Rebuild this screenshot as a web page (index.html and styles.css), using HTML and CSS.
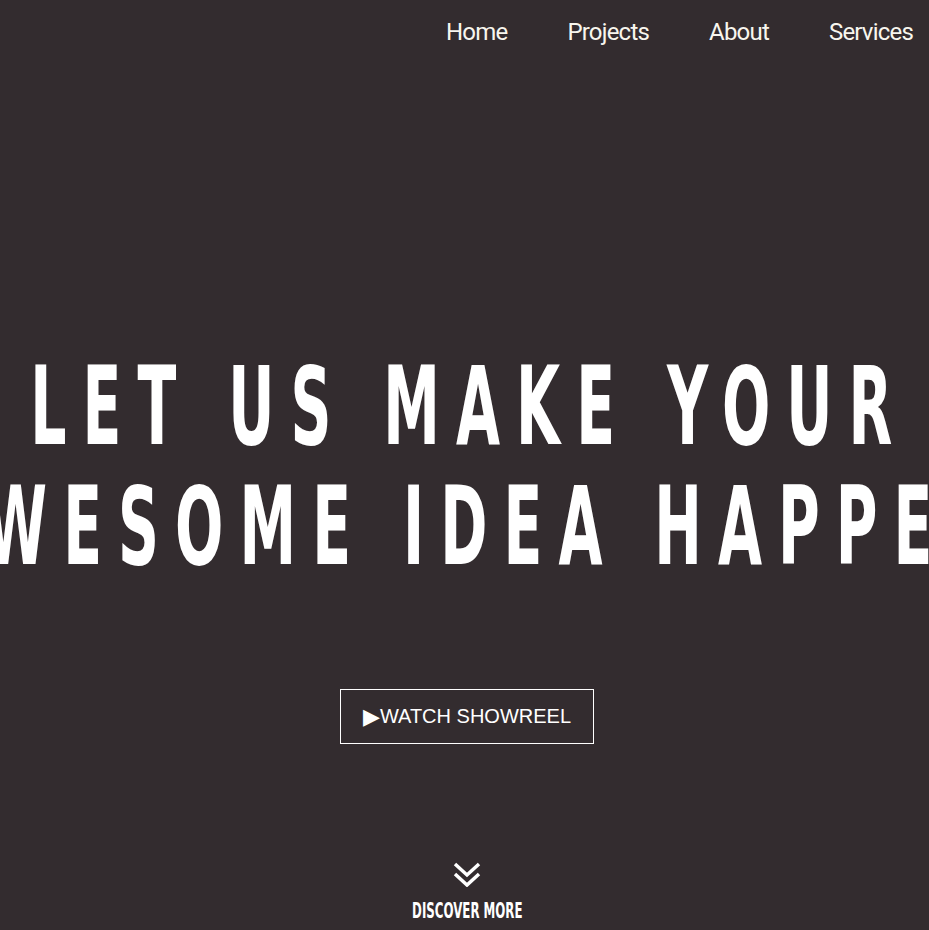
FILE: index.html
```html
<!DOCTYPE html>
<html lang="en">
<head>
<meta charset="utf-8">
<title>Let us make your awesome idea happen</title>
<link rel="stylesheet" href="styles.css">
</head>
<body>
<header class="site-header">
  <nav class="nav">
    <a class="nav-link" href="#">Home</a>
    <a class="nav-link" href="#">Projects</a>
    <a class="nav-link" href="#">About</a>
    <a class="nav-link" href="#">Services</a>
  </nav>
</header>
<main class="hero">
  <h1 class="headline">
    <span class="headline-row"><span class="headline-text">LET US MAKE YOUR</span></span>
    <span class="headline-row"><span class="headline-text">AWESOME IDEA HAPPEN</span></span>
  </h1>
  <a class="showreel" href="#"><span class="play">▶</span>WATCH SHOWREEL</a>
  <a class="discover" href="#">
    <svg class="chevrons" width="28" height="26" viewBox="0 0 28 26" aria-hidden="true">
      <polyline points="2,3 14,14 26,3" fill="none" stroke="#ffffff" stroke-width="3.5"/>
      <polyline points="2,13 14,24 26,13" fill="none" stroke="#ffffff" stroke-width="3.5"/>
    </svg>
    <span class="discover-row"><span class="discover-text">DISCOVER MORE</span></span>
  </a>
</main>
</body>
</html>
```

FILE: styles.css
```css
html, body {
  margin: 0;
  padding: 0;
}

body {
  background: #332c2f;
  color: #ffffff;
  overflow: hidden;
  height: 930px;
}

.site-header {
  height: 64px;
  display: flex;
  justify-content: flex-end;
}

.nav {
  display: flex;
  gap: 60px;
  padding: 18px 16px 0 0;
}

.nav-link {
  font-family: Roboto, "Noto Sans", sans-serif;
  font-size: 24px;
  line-height: 28px;
  letter-spacing: -0.8px;
  color: #f8f6ee;
  text-decoration: none;
}

.hero {
  display: flex;
  flex-direction: column;
  align-items: center;
}

.headline {
  margin: 283px 0 0;
  width: 100%;
  font-family: "Liberation Sans Narrow", "DejaVu Sans Condensed", "Liberation Sans", sans-serif;
  font-weight: 700;
  font-size: 109px;
  line-height: 120px;
}

.headline-row {
  display: flex;
  justify-content: center;
  white-space: nowrap;
  height: 120px;
}

.headline-text {
  display: inline-block;
  letter-spacing: 27.7px;
  margin-right: -27.7px;
  transform: translateX(-3px) scaleX(0.58);
  transform-origin: calc(50% - 13.85px) center;
}

.showreel {
  margin: 102px 0 0 5px;
  display: flex;
  align-items: center;
  height: 53px;
  padding: 0 22px;
  border: 1px solid #ffffff;
  font-family: "Liberation Sans", Arial, sans-serif;
  font-size: 20px;
  line-height: 53px;
  color: #ffffff;
  text-decoration: none;
}

.play {
  font-family: "DejaVu Sans", sans-serif;
  font-size: 22px;
  margin-right: 0;
}

.discover {
  margin: 117px 0 0 5px;
  display: flex;
  flex-direction: column;
  align-items: center;
  color: #ffffff;
  text-decoration: none;
}

.chevrons {
  display: block;
}

.discover-row {
  margin-top: 12px;
  display: flex;
  justify-content: center;
  width: 200px;
}

.discover-text {
  display: inline-block;
  font-family: "Liberation Sans Narrow", "DejaVu Sans Condensed", "Liberation Sans", sans-serif;
  font-weight: 700;
  font-size: 21px;
  line-height: 24px;
  white-space: nowrap;
  transform: scaleX(0.625);
}
```
